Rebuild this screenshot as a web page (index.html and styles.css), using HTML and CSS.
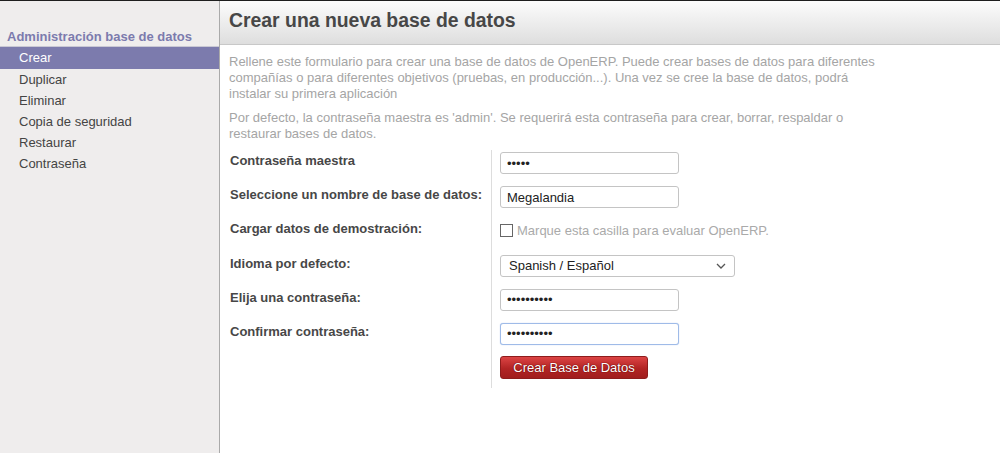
FILE: index.html
```html
<!DOCTYPE html>
<html lang="es">
<head>
<meta charset="utf-8">
<title>Crear una nueva base de datos</title>
<link rel="stylesheet" href="styles.css">
</head>
<body>
<div class="topbar"></div>
<div class="layout">
  <aside class="sidebar">
    <div class="side-title">Administración base de datos</div>
    <ul class="menu">
      <li class="item active">Crear</li>
      <li class="item">Duplicar</li>
      <li class="item">Eliminar</li>
      <li class="item">Copia de seguridad</li>
      <li class="item">Restaurar</li>
      <li class="item">Contraseña</li>
    </ul>
  </aside>
  <main class="main">
    <header class="header"><h1 class="title">Crear una nueva base de datos</h1></header>
    <div class="content">
      <p class="help">Rellene este formulario para crear una base de datos de OpenERP. Puede crear bases de datos para diferentes compañías o para diferentes objetivos (pruebas, en producción...). Una vez se cree la base de datos, podrá instalar su primera aplicación</p>
      <p class="help">Por defecto, la contraseña maestra es 'admin'. Se requerirá esta contraseña para crear, borrar, respaldar o restaurar bases de datos.</p>
      <div class="form">
        <div class="labels">
          <div class="label">Contraseña maestra</div>
          <div class="label">Seleccione un nombre de base de datos:</div>
          <div class="label">Cargar datos de demostración:</div>
          <div class="label">Idioma por defecto:</div>
          <div class="label">Elija una contraseña:</div>
          <div class="label">Confirmar contraseña:</div>
        </div>
        <div class="fields">
          <div class="field"><input class="input" type="password" value="admin"></div>
          <div class="field"><input class="input" type="text" value="Megalandia"></div>
          <div class="field check-field"><span class="checkbox"></span><span class="check-text">Marque esta casilla para evaluar OpenERP.</span></div>
          <div class="field"><div class="select"><span>Spanish / Español</span><svg class="chev" width="10" height="6" viewBox="0 0 10 6"><path d="M1 1 L5 5 L9 1" fill="none" stroke="#555" stroke-width="1.3"/></svg></div></div>
          <div class="field"><input class="input" type="password" value="1234567890"></div>
          <div class="field"><input class="input focus" type="password" value="1234567890"></div>
          <div class="field btn-field"><button class="btn">Crear Base de Datos</button></div>
        </div>
      </div>
    </div>
  </main>
</div>
</body>
</html>
```
FILE: styles.css
```css
* { box-sizing: border-box; }
html, body { margin: 0; padding: 0; height: 100%; }
body {
  font-family: "Liberation Sans", Arial, sans-serif;
  font-size: 13px;
  color: #4c4c4c;
  background: #fff;
  display: flex;
  flex-direction: column;
}
.topbar { height: 1px; background: #1e1e1e; flex: none; }
.layout { display: flex; flex: 1; }
.sidebar {
  width: 220px;
  flex: none;
  background: #efeded;
  border-right: 1px solid #aaa;
  padding-top: 27px;
}
.side-title {
  color: #7c7bad;
  font-weight: bold;
  font-size: 13px;
  padding: 0 0 2px 7px;
  height: 19px;
  line-height: 17px;
  border-bottom: 1px solid #c9c8d4;
}
.menu { list-style: none; margin: 0; padding: 0; }
.item {
  height: 21px;
  line-height: 21px;
  padding-left: 19px;
  color: #444;
  font-size: 13px;
}
.item.active { background: #7c7bad; color: #fff; height: 22px; line-height: 22px; }
.main { flex: 1; }
.header {
  height: 44px;
  background: linear-gradient(#fcfcfc, #dedede);
  border-bottom: 1px solid #c8c8c8;
  padding-left: 9px;
}
.title {
  margin: 0;
  font-size: 19.4px;
  font-weight: bold;
  color: #474747;
  line-height: 38px;
}
.content { padding: 9px 9px; }
.help {
  color: #a5a5a5;
  margin: 0 0 8px;
  line-height: 16px;
  max-width: 660px;
  font-size: 13px;
}
.form { display: flex; margin-top: 7px; }
.labels { width: 262px; padding-top: 3px; }
.label {
  height: 34.2px;
  font-weight: bold;
  color: #474747;
  line-height: 16px;
  padding-left: 1px;
}
.fields {
  border-left: 1px solid #ddd;
  padding-left: 8px;
  padding-top: 2px;
  padding-bottom: 9px;
}
.field { height: 34.2px; }
.input {
  width: 179px;
  height: 22px;
  border: 1px solid #c4c4c4;
  border-radius: 3px;
  padding: 0 6px;
  font-family: "Liberation Sans", Arial, sans-serif;
  font-size: 13px;
  color: #222;
  background: #fff;
  outline: none;
}
.input.focus { border: 1px solid #9fbbe8; box-shadow: 0 0 1px #9fbbe8; }
.check-field { display: flex; align-items: center; padding-top: 2px; height: 18px; margin-bottom: 16.2px; }
.checkbox {
  width: 13px; height: 13px;
  border: 1px solid #666;
  background: #fff;
  display: inline-block;
  margin-right: 4px;
}
.check-text { color: #aaa; font-size: 13px; }
.select {
  width: 235px;
  height: 22px;
  border: 1px solid #c4c4c4;
  border-radius: 3px;
  display: flex;
  align-items: center;
  justify-content: space-between;
  padding: 0 8px 0 8px;
  color: #222;
  background: #fff;
}
.chev { display: block; }
.btn-field { height: auto; margin-top: -1px; }
.btn {
  width: 148px;
  height: 23px;
  border: 1px solid #8e1c1c;
  border-radius: 3px;
  background: linear-gradient(#dc4444, #b22424 55%, #a01d1d);
  color: #fff;
  font-family: "Liberation Sans", Arial, sans-serif;
  font-size: 13px;
  text-shadow: 0 0 1px #600, 0 0 1px #600;
  padding: 0;
}
```
